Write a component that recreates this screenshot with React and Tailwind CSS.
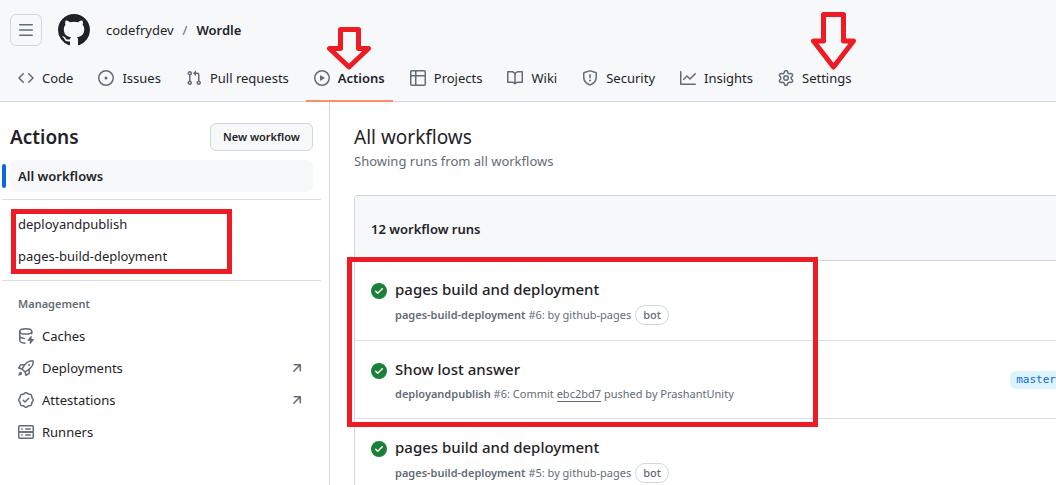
import React from "react";

const paths = {
  code: "m11.28 3.22 4.25 4.25a.75.75 0 0 1 0 1.06l-4.25 4.25a.749.749 0 0 1-1.275-.326.749.749 0 0 1 .215-.734L13.94 8l-3.72-3.72a.749.749 0 0 1 .326-1.275.749.749 0 0 1 .734.215Zm-6.56 0a.751.751 0 0 1 1.042.018.751.751 0 0 1 .018 1.042L2.06 8l3.72 3.72a.749.749 0 0 1-.326 1.275.749.749 0 0 1-.734-.215L.47 8.53a.75.75 0 0 1 0-1.06Z",
  issue: "M8 9.5a1.5 1.5 0 1 0 0-3 1.5 1.5 0 0 0 0 3ZM8 0a8 8 0 1 1 0 16A8 8 0 0 1 8 0ZM1.5 8a6.5 6.5 0 1 0 13 0 6.5 6.5 0 0 0-13 0Z",
  pull: "M1.5 3.25a2.25 2.25 0 1 1 3 2.122v5.256a2.251 2.251 0 1 1-1.5 0V5.372A2.25 2.25 0 0 1 1.5 3.25Zm5.677-.177L9.573.677A.25.25 0 0 1 10 .854V2.5h1A2.5 2.5 0 0 1 13.5 5v5.628a2.251 2.251 0 1 1-1.5 0V5a1 1 0 0 0-1-1h-1v1.646a.25.25 0 0 1-.427.177L7.177 3.427a.25.25 0 0 1 0-.354ZM3.75 2.5a.75.75 0 1 0 0 1.5.75.75 0 0 0 0-1.5Zm0 9.5a.75.75 0 1 0 0 1.5.75.75 0 0 0 0-1.5Zm8.25.75a.75.75 0 1 0 1.5 0 .75.75 0 0 0-1.5 0Z",
  play: "M8 0a8 8 0 1 1 0 16A8 8 0 0 1 8 0ZM1.5 8a6.5 6.5 0 1 0 13 0 6.5 6.5 0 0 0-13 0Zm4.879-2.773 4.264 2.559a.25.25 0 0 1 0 .428l-4.264 2.559A.25.25 0 0 1 6 10.559V5.442a.25.25 0 0 1 .379-.215Z",
  table: "M0 1.75C0 .784.784 0 1.75 0h12.5C15.216 0 16 .784 16 1.75v12.5A1.75 1.75 0 0 1 14.25 16H1.75A1.75 1.75 0 0 1 0 14.25ZM6.5 6.5v8h7.75a.25.25 0 0 0 .25-.25V6.5Zm8-1.5V1.75a.25.25 0 0 0-.25-.25H6.5V5Zm-13 1.5v7.75c0 .138.112.25.25.25H5v-8ZM5 5V1.5H1.75a.25.25 0 0 0-.25.25V5Z",
  book: "M0 1.75A.75.75 0 0 1 .75 1h4.253c1.227 0 2.317.59 3 1.501A3.743 3.743 0 0 1 11.006 1h4.245a.75.75 0 0 1 .75.75v10.5a.75.75 0 0 1-.75.75h-4.507a2.25 2.25 0 0 0-1.591.659l-.622.621a.75.75 0 0 1-1.06 0l-.622-.621A2.25 2.25 0 0 0 5.258 13H.75a.75.75 0 0 1-.75-.75Zm7.251 10.324.004-5.073-.002-2.253A2.25 2.25 0 0 0 5.003 2.5H1.5v9h3.757a3.75 3.75 0 0 1 1.994.574ZM8.755 4.75l-.004 7.322a3.752 3.752 0 0 1 1.992-.572H14.5v-9h-3.495a2.25 2.25 0 0 0-2.25 2.25Z",
  shield: "M7.467.133a1.748 1.748 0 0 1 1.066 0l5.25 1.68A1.75 1.75 0 0 1 15 3.48V7c0 1.566-.32 3.182-1.303 4.682-.983 1.498-2.585 2.813-5.032 3.855a1.697 1.697 0 0 1-1.33 0c-2.447-1.042-4.049-2.357-5.032-3.855C1.32 10.182 1 8.566 1 7V3.48a1.75 1.75 0 0 1 1.217-1.667Zm.61 1.429a.25.25 0 0 0-.153 0l-5.25 1.68a.25.25 0 0 0-.174.238V7c0 1.358.275 2.666 1.057 3.86.784 1.194 2.121 2.34 4.366 3.297a.196.196 0 0 0 .154 0c2.245-.956 3.582-2.104 4.366-3.298C13.225 9.666 13.5 8.36 13.5 7V3.48a.251.251 0 0 0-.174-.237l-5.25-1.68ZM8.75 4.75v3a.75.75 0 0 1-1.5 0v-3a.75.75 0 0 1 1.5 0ZM9 10.5a1 1 0 1 1-2 0 1 1 0 0 1 2 0Z",
  graph: "M1.5 1.75V13.5h13.75a.75.75 0 0 1 0 1.5H.75a.75.75 0 0 1-.75-.75V1.75a.75.75 0 0 1 1.5 0Zm14.28 2.53-5.25 5.25a.75.75 0 0 1-1.06 0L7 7.06 4.28 9.78a.751.751 0 0 1-1.042-.018.751.751 0 0 1-.018-1.042l3.25-3.25a.75.75 0 0 1 1.06 0L10 7.94l4.72-4.72a.751.751 0 0 1 1.042.018.751.751 0 0 1 .018 1.042Z",
  gear: "M8 0a8.2 8.2 0 0 1 .701.031C9.444.095 9.99.645 10.16 1.29l.288 1.107c.018.066.079.158.212.224.231.114.454.243.668.386.123.082.233.09.299.071l1.103-.303c.644-.176 1.392.021 1.82.63.27.385.506.792.704 1.218.315.675.111 1.422-.364 1.891l-.814.806c-.049.048-.098.147-.088.294.016.257.016.515 0 .772-.01.147.038.246.088.294l.814.806c.475.469.679 1.216.364 1.891a7.977 7.977 0 0 1-.704 1.217c-.428.61-1.176.807-1.82.63l-1.102-.302c-.067-.019-.177-.011-.3.071a5.909 5.909 0 0 1-.668.386c-.133.066-.194.158-.211.224l-.29 1.106c-.168.646-.715 1.196-1.458 1.26a8.006 8.006 0 0 1-1.402 0c-.743-.064-1.289-.614-1.458-1.26l-.289-1.106c-.018-.066-.079-.158-.212-.224a5.738 5.738 0 0 1-.668-.386c-.123-.082-.233-.09-.299-.071l-1.103.303c-.644.176-1.392-.021-1.82-.63a8.12 8.12 0 0 1-.704-1.218c-.315-.675-.111-1.422.363-1.891l.815-.806c.05-.048.098-.147.088-.294a6.214 6.214 0 0 1 0-.772c.01-.147-.038-.246-.088-.294l-.815-.806C.635 6.045.431 5.298.746 4.623a7.92 7.92 0 0 1 .704-1.217c.428-.61 1.176-.807 1.82-.63l1.102.302c.067.019.177.011.3-.071.214-.143.437-.272.668-.386.133-.066.194-.158.211-.224l.29-1.106C6.009.645 6.556.095 7.299.03 7.53.01 7.764 0 8 0Zm-.571 1.525c-.036.003-.108.036-.137.146l-.289 1.105c-.147.561-.549.967-.998 1.189-.173.086-.34.183-.5.29-.417.278-.97.423-1.529.27l-1.103-.303c-.109-.03-.175.016-.195.045-.22.312-.412.644-.573.99-.014.031-.021.11.059.19l.815.806c.411.406.562.957.53 1.456a4.709 4.709 0 0 0 0 .582c.032.499-.119 1.05-.53 1.456l-.815.806c-.081.08-.073.159-.059.19.162.346.353.677.573.989.02.03.085.076.195.046l1.102-.303c.56-.153 1.113-.008 1.53.27.161.107.328.204.501.29.447.222.85.629.997 1.189l.289 1.105c.029.109.101.143.137.146a6.6 6.6 0 0 0 1.142 0c.036-.003.108-.036.137-.146l.289-1.105c.147-.561.549-.967.998-1.189.173-.086.34-.183.5-.29.417-.278.97-.423 1.529-.27l1.103.303c.109.029.175-.016.195-.045.22-.313.411-.644.573-.99.014-.031.021-.11-.059-.19l-.815-.806c-.411-.406-.562-.957-.53-1.456a4.709 4.709 0 0 0 0-.582c-.032-.499.119-1.05.53-1.456l.815-.806c.081-.08.073-.159.059-.19a6.464 6.464 0 0 0-.573-.989c-.02-.03-.085-.076-.195-.046l-1.102.303c-.56.153-1.113.008-1.53-.27a4.44 4.44 0 0 0-.501-.29c-.447-.222-.85-.629-.997-1.189l-.289-1.105c-.029-.11-.101-.143-.137-.146a6.6 6.6 0 0 0-1.142 0ZM11 8a3 3 0 1 1-6 0 3 3 0 0 1 6 0ZM9.5 8a1.5 1.5 0 1 0-3.001.001A1.5 1.5 0 0 0 9.5 8Z",
  mark: "M8 0c4.42 0 8 3.58 8 8a8.013 8.013 0 0 1-5.45 7.59c-.4.08-.55-.17-.55-.38 0-.27.01-1.13.01-2.2 0-.75-.25-1.23-.54-1.48 1.78-.2 3.65-.88 3.65-3.95 0-.88-.31-1.59-.82-2.15.08-.2.36-1.02-.08-2.12 0 0-.67-.22-2.2.82-.64-.18-1.32-.27-2-.27-.68 0-1.36.09-2 .27-1.53-1.03-2.2-.82-2.2-.82-.44 1.1-.16 1.92-.08 2.12-.51.56-.82 1.28-.82 2.15 0 3.06 1.86 3.75 3.64 3.95-.23.2-.44.55-.51 1.07-.46.21-1.61.55-2.33-.66-.15-.24-.6-.83-1.23-.82-.67.01-.27.38.01.53.34.19.73.9.82 1.13.16.45.68 1.31 2.69.94 0 .67.01 1.3.01 1.49 0 .21-.15.45-.55.38A7.995 7.995 0 0 1 0 8c0-4.42 3.58-8 8-8Z",
  check: "M8 16A8 8 0 1 1 8 0a8 8 0 0 1 0 16Zm3.78-9.72a.751.751 0 0 0-.018-1.042.751.751 0 0 0-1.042-.018L6.75 9.19 5.28 7.72a.751.751 0 0 0-1.042.018.751.751 0 0 0-.018 1.042l2 2a.75.75 0 0 0 1.06 0Z",
  external: "M4.53 4.75A.75.75 0 0 1 5.28 4h6.01a.75.75 0 0 1 .75.75v6.01a.75.75 0 0 1-1.5 0v-4.2l-5.26 5.261a.749.749 0 0 1-1.275-.326.749.749 0 0 1 .215-.734L9.48 5.5h-4.2a.75.75 0 0 1-.75-.75Z",
  rocket: "M14.064 0h.186C15.216 0 16 .784 16 1.75v.186a8.752 8.752 0 0 1-2.564 6.186l-.458.459c-.314.314-.641.616-.979.904v3.207c0 .608-.315 1.172-.833 1.49l-2.774 1.707a.749.749 0 0 1-1.11-.418l-.954-3.102a1.214 1.214 0 0 1-.145-.125L3.754 9.816a1.218 1.218 0 0 1-.124-.145L.528 8.717a.749.749 0 0 1-.418-1.11l1.71-2.774A1.748 1.748 0 0 1 3.31 4h3.204c.288-.338.59-.665.904-.979l.459-.458A8.749 8.749 0 0 1 14.064 0ZM8.938 3.623h-.002l-.458.458c-.76.76-1.437 1.598-2.02 2.5l-1.5 2.317 2.143 2.143 2.317-1.5c.902-.583 1.74-1.26 2.499-2.02l.459-.458a7.25 7.25 0 0 0 2.123-5.127V1.75a.25.25 0 0 0-.25-.25h-.186a7.249 7.249 0 0 0-5.125 2.123ZM3.56 14.56c-.732.732-2.334 1.045-3.005 1.148a.234.234 0 0 1-.201-.064.234.234 0 0 1-.064-.201c.103-.671.416-2.273 1.15-3.003a1.502 1.502 0 1 1 2.12 2.12Zm6.94-3.935c-.088.06-.177.118-.266.175l-2.35 1.521.548 1.783 1.949-1.2a.25.25 0 0 0 .119-.213ZM3.678 8.116 5.2 5.766c.058-.09.117-.178.176-.266H3.309a.25.25 0 0 0-.213.119l-1.2 1.95ZM12 5a1 1 0 1 1-2 0 1 1 0 0 1 2 0Z",
  verified: "m9.585.52.929.68c.153.112.331.186.518.215l1.138.175a2.678 2.678 0 0 1 2.24 2.24l.174 1.139c.029.187.103.365.215.518l.68.928a2.677 2.677 0 0 1 0 3.17l-.68.928a1.174 1.174 0 0 0-.215.518l-.175 1.138a2.678 2.678 0 0 1-2.241 2.241l-1.138.175a1.17 1.17 0 0 0-.518.215l-.928.68a2.677 2.677 0 0 1-3.17 0l-.928-.68a1.174 1.174 0 0 0-.518-.215L3.83 14.41a2.678 2.678 0 0 1-2.24-2.24l-.175-1.138a1.17 1.17 0 0 0-.215-.518l-.68-.928a2.677 2.677 0 0 1 0-3.17l.68-.928c.112-.153.186-.331.215-.518l.175-1.14a2.678 2.678 0 0 1 2.24-2.24l1.139-.175c.187-.029.365-.103.518-.215l.928-.68a2.677 2.677 0 0 1 3.17 0ZM7.303 1.728l-.927.68a2.67 2.67 0 0 1-1.18.489l-1.137.174a1.179 1.179 0 0 0-.987.987l-.174 1.136a2.677 2.677 0 0 1-.489 1.18l-.68.928a1.18 1.18 0 0 0 0 1.394l.68.927c.256.348.424.753.489 1.18l.174 1.137c.078.509.478.909.987.987l1.136.174a2.67 2.67 0 0 1 1.18.489l.928.68c.414.305.979.305 1.394 0l.927-.68a2.67 2.67 0 0 1 1.18-.489l1.137-.174a1.18 1.18 0 0 0 .987-.987l.174-1.136a2.67 2.67 0 0 1 .489-1.18l.68-.928a1.176 1.176 0 0 0 0-1.394l-.68-.927a2.686 2.686 0 0 1-.489-1.18l-.174-1.137a1.179 1.179 0 0 0-.987-.987l-1.136-.174a2.677 2.677 0 0 1-1.18-.489l-.928-.68a1.176 1.176 0 0 0-1.394 0ZM11.28 6.78l-3.75 3.75a.75.75 0 0 1-1.06 0L4.72 8.78a.751.751 0 0 1 .018-1.042.751.751 0 0 1 1.042-.018L7 8.94l3.22-3.22a.751.751 0 0 1 1.042.018.751.751 0 0 1 .018 1.042Z",
};

function Icon({ name, className = "size-4 text-[#636c76]" }) {
  return (
    <svg viewBox="0 0 16 16" fill="currentColor" aria-hidden="true" className={`shrink-0 ${className}`}>
      <path fillRule="evenodd" d={paths[name]} />
    </svg>
  );
}

function CacheIcon() {
  return (
    <svg viewBox="0 0 16 16" fill="none" stroke="currentColor" strokeWidth="1.5" strokeLinecap="round" aria-hidden="true" className="size-4 shrink-0 text-[#636c76]">
      <ellipse cx="7.75" cy="3.4" rx="6" ry="2.6" />
      <path d="M1.75 3.5v9c0 1.3 2.2 2.4 5.2 2.7M13.75 3.5v2.2M1.75 8c0 1.2 1.9 2.2 4.6 2.5" />
      <path d="M13.6 8.1v3h1.9c.4 0 .5.4.3.7l-3.3 4.1c-.3.3-.7.1-.7-.2v-2.9H9.9c-.4 0-.6-.4-.3-.7l3.3-4.2c.2-.3.7-.2.7.2Z" fill="currentColor" stroke="none" />
    </svg>
  );
}

function ServerIcon() {
  return (
    <svg viewBox="0 0 16 16" fill="none" stroke="currentColor" strokeWidth="1.5" strokeLinecap="round" aria-hidden="true" className="size-4 shrink-0 text-[#636c76]">
      <rect x=".75" y="1.75" width="14.5" height="6.25" rx="1" />
      <rect x=".75" y="8" width="14.5" height="6.25" rx="1" />
      <path d="M3.75 4.9h.5M7.75 4.9h4.5M3.75 11.1h.5M7.75 11.1h4.5" />
    </svg>
  );
}

const tabs = [
  { label: "Code", icon: "code" },
  { label: "Issues", icon: "issue" },
  { label: "Pull requests", icon: "pull" },
  { label: "Actions", icon: "play", active: true },
  { label: "Projects", icon: "table" },
  { label: "Wiki", icon: "book" },
  { label: "Security", icon: "shield" },
  { label: "Insights", icon: "graph" },
  { label: "Settings", icon: "gear" },
];

const management = [
  { label: "Caches", icon: <CacheIcon /> },
  { label: "Deployments", icon: <Icon name="rocket" />, external: true },
  { label: "Attestations", icon: <Icon name="verified" />, external: true },
  { label: "Runners", icon: <ServerIcon /> },
];

function Header() {
  return (
    <header className="border-b border-[#d0d7de] bg-[#f6f8fa]">
      <div className="flex items-center px-2.5 pt-3.5">
        <button type="button" aria-label="Open menu" className="flex size-8 items-center justify-center rounded-md border border-[#d0d7de]">
          <svg viewBox="0 0 16 16" stroke="currentColor" strokeWidth="1.5" strokeLinecap="round" aria-hidden="true" className="size-4 text-[#636c76]">
            <path d="M1.75 2.75h12.5M1.75 8h12.5M1.75 13.25h12.5" />
          </svg>
        </button>
        <a href="#home" aria-label="Home" className="ml-4">
          <Icon name="mark" className="size-8 text-[#1f2328]" />
        </a>
        <nav aria-label="Breadcrumb" className="ml-4 flex gap-[9px]">
          <a href="#owner">codefrydev</a>
          <span className="text-[#636c76]">/</span>
          <a href="#repo" className="font-semibold">Wordle</a>
        </nav>
      </div>
      <nav aria-label="Repository" className="-mb-px flex gap-[9px] px-2.5 pt-2.5">
        {tabs.map((t) => (
          <a
            key={t.label}
            href={"#" + t.label}
            aria-current={t.active ? "page" : undefined}
            className={
              "flex h-[46px] items-center gap-2 border-b-2 px-2 whitespace-nowrap " +
              (t.active ? "border-[#fd8c73] font-semibold" : "border-transparent")
            }
          >
            <Icon name={t.icon} />
            {t.label}
          </a>
        ))}
      </nav>
    </header>
  );
}

function Sidebar() {
  return (
    <aside className="w-[330px] shrink-0 border-r border-[#d0d7de] pt-[21px]">
      <div className="flex items-center justify-between pr-4 pl-2.5">
        <h2 className="text-[19px] leading-7 font-semibold">Actions</h2>
        <button type="button" className="h-7 rounded-md border border-[#d0d7de] bg-[#f6f8fa] px-3 text-[11px] font-semibold">
          New workflow
        </button>
      </div>
      <nav aria-label="Workflows" className="mt-[9px] pr-2 pl-0.5">
        <div className="flex items-center gap-1 pr-2">
          <span className="h-6 w-1 rounded-md bg-[#0969da]" />
          <a href="#all" aria-current="page" className="flex h-8 flex-1 items-center rounded-md bg-[#f6f8fa] px-2 font-semibold">
            All workflows
          </a>
        </div>
        <div className="relative mt-[7px] border-y border-[#d8dee4] py-2 pl-2">
          <a href="#deployandpublish" className="flex h-8 items-center px-2">deployandpublish</a>
          <a href="#pages-build-deployment" className="flex h-8 items-center px-2">pages-build-deployment</a>
          <div className="pointer-events-none absolute top-[9px] left-[9px] h-[65px] w-[221px] border-[5px] border-[#ed1c24]" />
        </div>
        <div className="pt-3.5 pr-2 pl-2">
          <h3 className="px-2 pb-[7px] text-[11px] leading-[18px] font-semibold text-[#636c76]">Management</h3>
          {management.map((m) => (
            <a key={m.label} href={"#" + m.label} className="flex h-8 items-center gap-2 px-2">
              {m.icon}
              <span className="flex-1">{m.label}</span>
              {m.external && <Icon name="external" />}
            </a>
          ))}
        </div>
      </nav>
    </aside>
  );
}

function Run({ title, children, branch }) {
  return (
    <li className="flex items-center border-b border-[#d8dee4] pl-4">
      <div className="flex flex-1 gap-2 pt-4 pb-[15px]">
        <Icon name="check" className="mt-1.5 size-4 text-[#1a7f37]" />
        <div>
          <a href="#run" className="block text-[15px] leading-6 font-medium">{title}</a>
          <div className="mt-1 text-[11px] leading-[18px] text-[#636c76]">{children}</div>
        </div>
      </div>
      {branch && (
        <a href="#branch" className="rounded-l-md bg-[#ddf4ff] pl-1.5 font-['DejaVu_Sans_Mono',monospace] text-[11px] leading-[18px] text-[#0969da]">
          {branch}
        </a>
      )}
    </li>
  );
}

function BotRun({ number }) {
  return (
    <Run title="pages build and deployment">
      <span className="flex items-center gap-1">
        <span><b className="font-semibold">pages-build-deployment</b> #{number}: by github-pages</span>
        <span className="rounded-full border border-[#d0d7de] px-[7px] font-medium">bot</span>
      </span>
    </Run>
  );
}

function RunList() {
  return (
    <main className="min-w-0 flex-1 pt-[19px] pl-6">
      <h1 className="text-[19px] leading-8">All workflows</h1>
      <p className="leading-4 text-[#636c76]">Showing runs from all workflows</p>
      <section className="relative mt-[26px] rounded-tl-sm border-t border-l border-[#d0d7de]">
        <div className="flex h-[65px] items-center rounded-tl-sm border-b border-[#d0d7de] bg-[#f6f8fa] px-4 pt-0.5 font-semibold">
          12 workflow runs
        </div>
        <ul>
          <BotRun number={6} />
          <Run title="Show lost answer" branch="master">
            <b className="font-semibold">deployandpublish</b> #6: Commit{" "}
            <a href="#commit" className="border-b border-[#636c76]">ebc2bd7</a> pushed by PrashantUnity
          </Run>
          <BotRun number={5} />
        </ul>
        <div className="pointer-events-none absolute top-[61px] -left-2 h-[170px] w-[471px] border-[5px] border-[#ed1c24]" />
      </section>
    </main>
  );
}

function Arrow({ className, points }) {
  return (
    <svg viewBox="0 0 46 60" fill="none" stroke="#ed1c24" strokeWidth="5" strokeLinejoin="round" aria-hidden="true" className={`pointer-events-none absolute h-[60px] w-[46px] ${className}`}>
      <polygon points={points} />
    </svg>
  );
}

export default function App() {
  return (
    <div className="relative flex h-screen flex-col overflow-hidden bg-white font-['Noto_Sans',sans-serif] text-[13px] leading-5 text-[#1f2328]">
      <Header />
      <div className="flex flex-1">
        <Sidebar />
        <RunList />
      </div>
      <Arrow className="top-2.5 left-[326px]" points="14.5,19.5 32.5,19.5 32.5,38.5 42.5,38.5 23,57 3.5,38.5 14.5,38.5" />
      <Arrow className="top-2.5 left-[811px]" points="12.5,4.5 32.5,4.5 32.5,31 42.5,31 22.5,57 2.5,31 12.5,31" />
    </div>
  );
}
